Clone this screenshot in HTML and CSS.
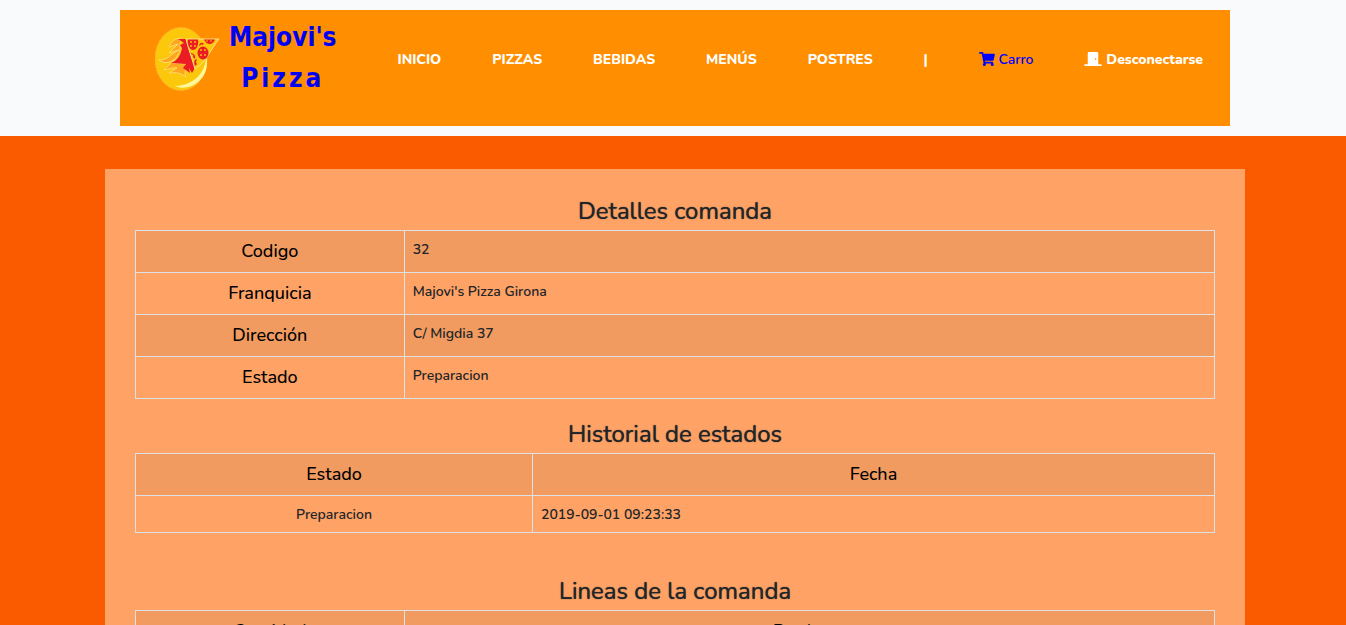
FILE: index.html
```
<!DOCTYPE html>
<html lang="es">
<head>
<meta charset="utf-8">
<meta name="viewport" content="width=device-width, initial-scale=1">
<title>Majovi's Pizza</title>
<link rel="stylesheet" href="styles.css">
</head>
<body>
<header class="site-header">
  <nav class="navbar" aria-label="Principal">
    <a class="brand" href="#">
      <svg class="brand-mark" viewBox="0 0 66 66" aria-hidden="true">
        <ellipse cx="26" cy="33" rx="26" ry="31.500" fill="#fbc80c" stroke="#ffb43c" stroke-width="1" stroke-dasharray="2 1"/>
        <path d="M51 30C51 45 41 59 20 60C34 67 57 53 51 30Z" fill="#fff79a"/>
        <path d="M26 12C20 12 16 16 14 21L23 18L14 27L24 24C17 27 12 35 4 34C9 38 15 37 20 33L9 44C15 43 18 41 22 42L14 47C22 46 26 47 31 51C29 46 30 44 33 43L31 38L18 37L25 25V18Z" fill="#ffa51f" stroke="#ffdb69" stroke-width="1"/>
        <path d="M23 13H32L38 37L40 42L37 47L34 42L35 47L28 42L31 38L16 37C22 35 26 29 27 22L25 19L29 17Z" fill="#eb1c24"/>
        <path d="M31 13H64C56 23 51 36 40 43C37 32 33 22 31 13Z" fill="#fbc80c" stroke="#ffe08a" stroke-width="1"/>
        <g fill="#eb1c24">
          <path d="M33 13.500H43C44 20 41 24 38 24C34 24 32 17 33 13.500ZM49 13.500H60C58 19 52 20 49 13.500Z"/>
          <ellipse cx="48" cy="27" rx="5.500" ry="6.500"/>
          <path d="M44 19Q46 15 49 18L47 19Q46 17 45 20ZM36 27Q41 28 40 33L38 31Q39 29 36 28ZM41 33Q38 35 40 40L42 38Q40 36 42 34Z"/>
        </g>
        <g fill="#fbc80c">
          <circle cx="36" cy="16" r=".9"/><circle cx="40" cy="16" r=".9"/><circle cx="36" cy="20" r=".9"/><circle cx="40" cy="20" r=".9"/>
          <circle cx="52" cy="15" r=".8"/><circle cx="56" cy="15" r=".8"/>
          <circle cx="46" cy="24" r=".9"/><circle cx="50" cy="24" r=".9"/><circle cx="46" cy="29" r=".9"/><circle cx="50" cy="29" r=".9"/>
        </g>
      </svg>
      <span class="brand-name"><span>Majovi's</span><span class="brand-sub">Pizza</span></span>
    </a>
    <ul class="menu">
      <li><a href="#">INICIO</a></li>
      <li><a href="#">PIZZAS</a></li>
      <li><a href="#">BEBIDAS</a></li>
      <li><a href="#">MENÚS</a></li>
      <li><a href="#">POSTRES</a></li>
      <li>|</li>
      <li><a class="cart" href="#"><svg class="icon" viewBox="0 0 576 512" aria-hidden="true"><path fill="currentColor" d="M528.120 301.319l47.273-208C578.806 78.301 567.391 64 551.990 64H159.208l-9.166-44.810C147.758 8.021 137.930 0 126.529 0H24C10.745 0 0 10.745 0 24v16c0 13.255 10.745 24 24 24h69.883l70.248 343.435C147.325 417.100 136 435.222 136 456c0 30.928 25.072 56 56 56s56-25.072 56-56c0-15.674-6.447-29.835-16.824-40h209.647C430.447 426.165 424 440.326 424 456c0 30.928 25.072 56 56 56s56-25.072 56-56c0-22.172-12.888-41.332-31.579-50.405l5.517-24.276c3.413-15.018-8.002-29.319-23.403-29.319H218.117l-6.545-32h293.145c11.206 0 20.920-7.754 23.403-18.681z"/></svg> Carro</a></li>
      <li><a href="#"><svg class="icon door" viewBox="0 0 640 512" aria-hidden="true"><path fill="currentColor" fill-rule="evenodd" d="M624 448H512V50C512 22 490 0 464 0H176C150 0 128 22 128 50V448H16C7 448 0 455 0 464V496C0 505 7 512 16 512H624C633 512 640 505 640 496V464C640 455 633 448 624 448ZM415 288C397 288 383 274 383 256S397 224 415 224S447 238 447 256S433 288 415 288Z"/></svg> Desconectarse</a></li>
    </ul>
  </nav>
</header>
<main class="page">
  <div class="panel">
    <h2>Detalles comanda</h2>
    <table class="details">
      <tbody>
        <tr><th scope="row">Codigo</th><td>32</td></tr>
        <tr><th scope="row">Franquicia</th><td>Majovi's Pizza Girona</td></tr>
        <tr><th scope="row">Dirección</th><td>C/ Migdia 37</td></tr>
        <tr><th scope="row">Estado</th><td>Preparacion</td></tr>
      </tbody>
    </table>
    <h2>Historial de estados</h2>
    <table class="history">
      <thead><tr><th scope="col">Estado</th><th scope="col">Fecha</th></tr></thead>
      <tbody><tr><td>Preparacion</td><td>2019-09-01 09:23:33</td></tr></tbody>
    </table>
    <h2>Lineas de la comanda</h2>
    <table class="lines">
      <thead><tr><th scope="col">Cantidad</th><th scope="col">Producto</th></tr></thead>
    </table>
  </div>
</main>
</body>
</html>
```
FILE: styles.css
```
* { box-sizing: border-box; }

body {
  margin: 0;
  height: 100vh;
  overflow: hidden;
  background: #fa5b00;
  color: #212529;
  font-family: Nunito, "Noto Sans", sans-serif;
  font-size: 14px;
  font-weight: 600;
  line-height: 21px;
}

.site-header {
  padding: 10px 16px 10px 20px;
  background: #f8fafc;
}

.navbar {
  display: flex;
  align-items: flex-start;
  max-width: 1110px;
  min-height: 116px;
  margin: 0 auto;
  padding: 7px 27px 0 35px;
  background: #ff8f00;
}

.brand {
  display: flex;
  gap: 8px;
  color: #0000f5;
  font-family: "DejaVu Sans Condensed", "DejaVu Sans", sans-serif;
  font-stretch: condensed;
  font-size: 26px;
  font-weight: bold;
  line-height: 41px;
  text-decoration: none;
}

.brand-mark {
  width: 66px;
  height: 66px;
  margin-top: 9px;
}

.brand-name {
  display: flex;
  flex-direction: column;
  align-items: center;
}

.brand-sub { letter-spacing: 3px; }

.menu {
  display: flex;
  flex: 1;
  justify-content: space-between;
  margin: 0;
  padding: 32px 0 0 61px;
  list-style: none;
  color: #fff;
  font-family: Nunito, Lato, sans-serif;
  font-weight: 800;
  white-space: nowrap;
}

.menu a {
  color: inherit;
  text-decoration: none;
}

.menu .cart {
  color: #00f;
  font-weight: 600;
}

.icon {
  width: 16px;
  height: 14px;
  vertical-align: -2px;
}

.door { width: 18px; }

.page { padding: 33px 16px 0 20px; }

.panel {
  max-width: 1140px;
  margin: 0 auto;
  padding: 27px 30px;
  background: #ffa265;
}

h2 {
  margin: 0 0 4px;
  font-size: 24px;
  font-weight: 400;
  line-height: 30px;
  text-align: center;
  text-shadow: 0 0 1px currentColor;
}

table {
  width: 100%;
  margin-bottom: 20px;
  border-collapse: collapse;
  table-layout: fixed;
}

.history { margin-bottom: 43px; }

th, td {
  padding: 8px 8px 7px;
  border: 1px solid #dee2e6;
  vertical-align: top;
}

th {
  padding: 8px;
  color: #000;
  font-size: 18px;
  font-weight: 500;
  line-height: 25px;
  text-align: center;
}

tr:nth-child(odd) th,
.details tr:nth-child(odd) td { background: #f19b61; }

.details th, .lines th:first-child { width: 24.9%; }

.history th:first-child { width: 36.8%; }

.history td:first-child { text-align: center; }

.history tbody tr { background: #ffa265; }
```
